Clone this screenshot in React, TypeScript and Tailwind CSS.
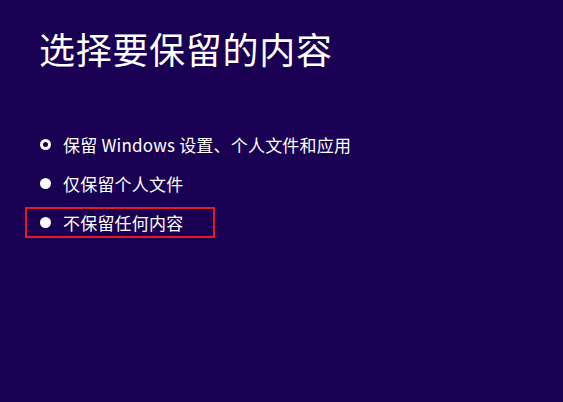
import React from "react";

const font = { fontFamily: '"Noto Sans CJK SC", "Noto Sans", sans-serif' };

function Radio({ checked }: { checked?: boolean }) {
  return (
    <span className="flex h-[11px] w-[11px] shrink-0 items-center justify-center rounded-full bg-white">
      {checked && <span className="h-[5px] w-[5px] rounded-full bg-[#1a0050]" />}
    </span>
  );
}

export default function App() {
  const options = [
    { label: "保留 Windows 设置、个人文件和应用", checked: true },
    { label: "仅保留个人文件" },
    { label: "不保留任何内容", boxed: true },
  ];
  return (
    <div
      className="h-[402px] w-[563px] overflow-hidden bg-[#190052] text-white"
      style={font}
    >
      <h1 className="pl-[39px] pt-[24px] text-[36px] font-normal leading-[48px] tracking-[0.7px]">
        选择要保留的内容
      </h1>
      <div className="mt-[57px] flex flex-col items-start gap-[8px] pl-[25px]">
        {options.map((o) => (
          <div
            key={o.label}
            className={
              "flex h-[31px] items-center gap-[12px] whitespace-nowrap text-[17px] " +
              (o.boxed ? "w-[190px] border-2 border-[#e01b24] pl-[13px]" : "pl-[15px]")
            }
          >
            <Radio checked={o.checked} />
            <span className="leading-none tracking-[0.2px]">{o.label}</span>
          </div>
        ))}
      </div>
    </div>
  );
}
